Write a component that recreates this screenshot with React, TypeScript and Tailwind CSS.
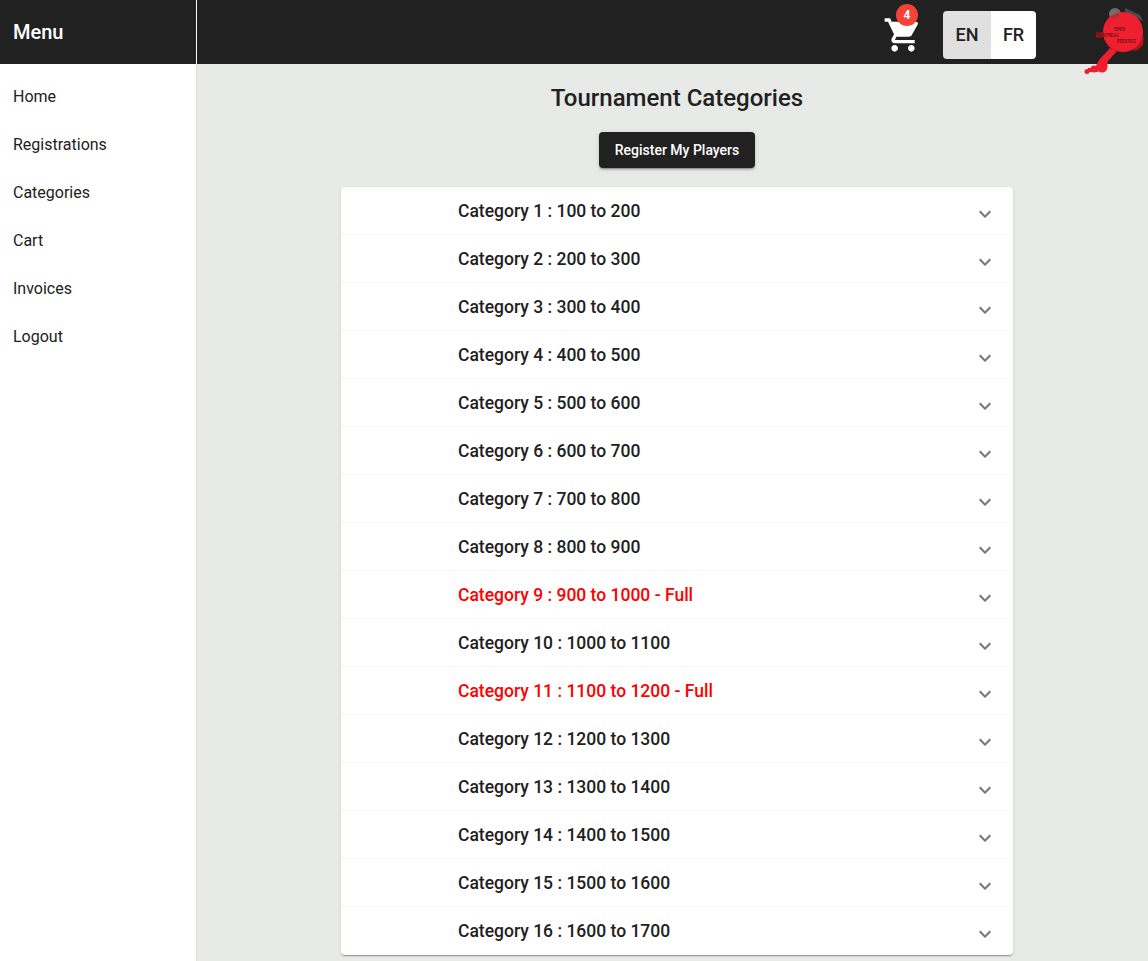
const navItems = ["Home", "Registrations", "Categories", "Cart", "Invoices", "Logout"];

const categories = [
  { label: "Category 1 : 100 to 200" },
  { label: "Category 2 : 200 to 300" },
  { label: "Category 3 : 300 to 400" },
  { label: "Category 4 : 400 to 500" },
  { label: "Category 5 : 500 to 600" },
  { label: "Category 6 : 600 to 700" },
  { label: "Category 7 : 700 to 800" },
  { label: "Category 8 : 800 to 900" },
  { label: "Category 9 : 900 to 1000 - Full", full: true },
  { label: "Category 10 : 1000 to 1100" },
  { label: "Category 11 : 1100 to 1200 - Full", full: true },
  { label: "Category 12 : 1200 to 1300" },
  { label: "Category 13 : 1300 to 1400" },
  { label: "Category 14 : 1400 to 1500" },
  { label: "Category 15 : 1500 to 1600" },
  { label: "Category 16 : 1600 to 1700" },
];

/* cart icon, material shopping cart */
function CartIcon() {
  return (
    <svg viewBox="0 0 24 24" className="block w-10 h-10 fill-white">
      <path d="M7 18c-1.1 0-1.99.9-1.99 2S5.9 22 7 22s2-.9 2-2-.9-2-2-2zM1 2v2h2l3.6 7.59-1.35 2.45c-.16.28-.25.61-.25.96 0 1.1.9 2 2 2h12v-2H7.42c-.14 0-.25-.11-.25-.25l.03-.12.9-1.63h7.45c.75 0 1.41-.41 1.75-1.03l3.58-6.49c.08-.14.12-.31.12-.48 0-.55-.45-1-1-1H5.21l-.94-2H1zm16 16c-1.1 0-1.99.9-1.99 2s.89 2 1.99 2 2-.9 2-2-.9-2-2-2z" />
    </svg>
  );
}

/* material expand more */
function ExpandIcon() {
  return (
    <svg viewBox="0 0 24 24" className="block w-6 h-6 mt-[7px] fill-[#757575]">
      <path d="M16.59 8.59 12 13.17 7.41 8.59 6 10l6 6 6-6z" />
    </svg>
  );
}

/* tournament logo: red paddle with splatter handle */
function Logo() {
  return (
    <svg viewBox="0 0 65 68" className="block w-[65px] h-[68px]">
      <path d="M42 0l15 7 3 6-6-3-12-6z" fill="#4b4b4b" />
      <circle cx="32" cy="6" r="6" fill="#6e6e6e" />
      <path d="M55 34l6-6-1 9-5 5-5 1z" fill="#a8161f" />
      <circle cx="40" cy="24" r="20" fill="#ee1f2e" />
      <path d="M28 9a6 6 0 0 0 9-2.500 20 20 0 0 0-4-.5z" fill="#a5343c" />
      <path d="M27 40l7 3-9 10-1 6-12 1 4-8z" fill="#ee1f2e" />
      <circle cx="19" cy="59" r="5.500" fill="#ee1f2e" />
      <circle cx="11" cy="61" r="3.500" fill="#ee1f2e" />
      <circle cx="4" cy="63.500" r="2.500" fill="#ee1f2e" />
      <rect x="5" y="60" width="10" height="4" fill="#ee1f2e" />
      <rect x="13" y="24.500" width="7" height="5" fill="#a50f19" />
      <text x="31" y="23" fontSize="5" fontFamily="Liberation Sans" fontWeight="700" fill="#7a0f15" textLength="11" lengthAdjust="spacingAndGlyphs">
        OPEN
      </text>
      <text x="13" y="29" fontSize="5" fontFamily="Liberation Sans" fontWeight="700" fill="#7a0f15" textLength="23" lengthAdjust="spacingAndGlyphs">
        MONTREAL
      </text>
      <text x="34" y="35" fontSize="5" fontFamily="Liberation Sans" fontWeight="700" fill="#7a0f15" textLength="19" lengthAdjust="spacingAndGlyphs">
        PRESTIGE
      </text>
    </svg>
  );
}

export default function App() {
  return (
    <div className="relative flex h-[961px] overflow-hidden bg-[#e8eae7] font-['Roboto',sans-serif] text-[#212121]">
      {/* sidebar */}
      <aside className="w-[197px] shrink-0 flex flex-col bg-white border-r border-[#dcdcdc]">
        <div className="h-16 -mr-px bg-[#212121] border-r border-white flex items-center px-[13px]">
          <h2 className="text-xl font-medium text-white">Menu</h2>
        </div>
        <nav className="pt-[9px]">
          {navItems.map((item) => (
            <div key={item} className="h-12 flex items-center px-[13px] text-base">
              {item}
            </div>
          ))}
        </nav>
      </aside>

      <div className="flex-1 flex flex-col min-w-0">
        {/* top bar */}
        <header className="h-16 shrink-0 bg-[#212121] flex items-center pt-[6px]">
          <div className="ml-[686px] relative">
            <CartIcon />
            <span className="absolute -top-[11px] left-[13px] w-[22px] h-[22px] rounded-full bg-[#f44336] text-white text-xs font-bold flex items-center justify-center">
              4
            </span>
          </div>
          <div className="ml-[20px] flex h-12 rounded overflow-hidden font-medium text-lg">
            <div className="w-12 bg-[#e0e0e0] flex items-center justify-center">EN</div>
            <div className="w-[45px] bg-white flex items-center justify-center">FR</div>
          </div>
        </header>

        {/* content */}
        <main className="flex-1 flex flex-col items-center pl-[9px]">
          <h1 className="mt-5 text-2xl leading-7 font-medium">Tournament Categories</h1>
          <button className="mt-[20px] h-9 px-4 rounded bg-[#212121] text-white text-sm font-medium shadow-[0_3px_1px_-2px_rgba(0,0,0,0.2),0_2px_2px_0_rgba(0,0,0,0.14),0_1px_5px_0_rgba(0,0,0,0.12)]">
            Register My Players
          </button>
          <div className="mt-[19px] w-[672px] bg-white rounded shadow-[0_2px_1px_-1px_rgba(0,0,0,0.2),0_1px_1px_0_rgba(0,0,0,0.14),0_1px_3px_0_rgba(0,0,0,0.12)]">
            {categories.map((cat, i) => (
              <div
                key={cat.label}
                className={`h-12 flex items-center pl-[117px] pr-4 border-b ${i < categories.length - 1 ? "border-[#f7f7f7]" : "border-transparent"}`}
              >
                <span className={`flex-1 pt-[2px] text-[17.5px] font-medium ${cat.full ? "text-[#ff0000]" : ""}`}>
                  {cat.label}
                </span>
                <ExpandIcon />
              </div>
            ))}
          </div>
        </main>
      </div>

      {/* logo hangs over the top bar edge */}
      <div className="absolute top-[8px] left-[1083px]">
        <Logo />
      </div>
    </div>
  );
}
